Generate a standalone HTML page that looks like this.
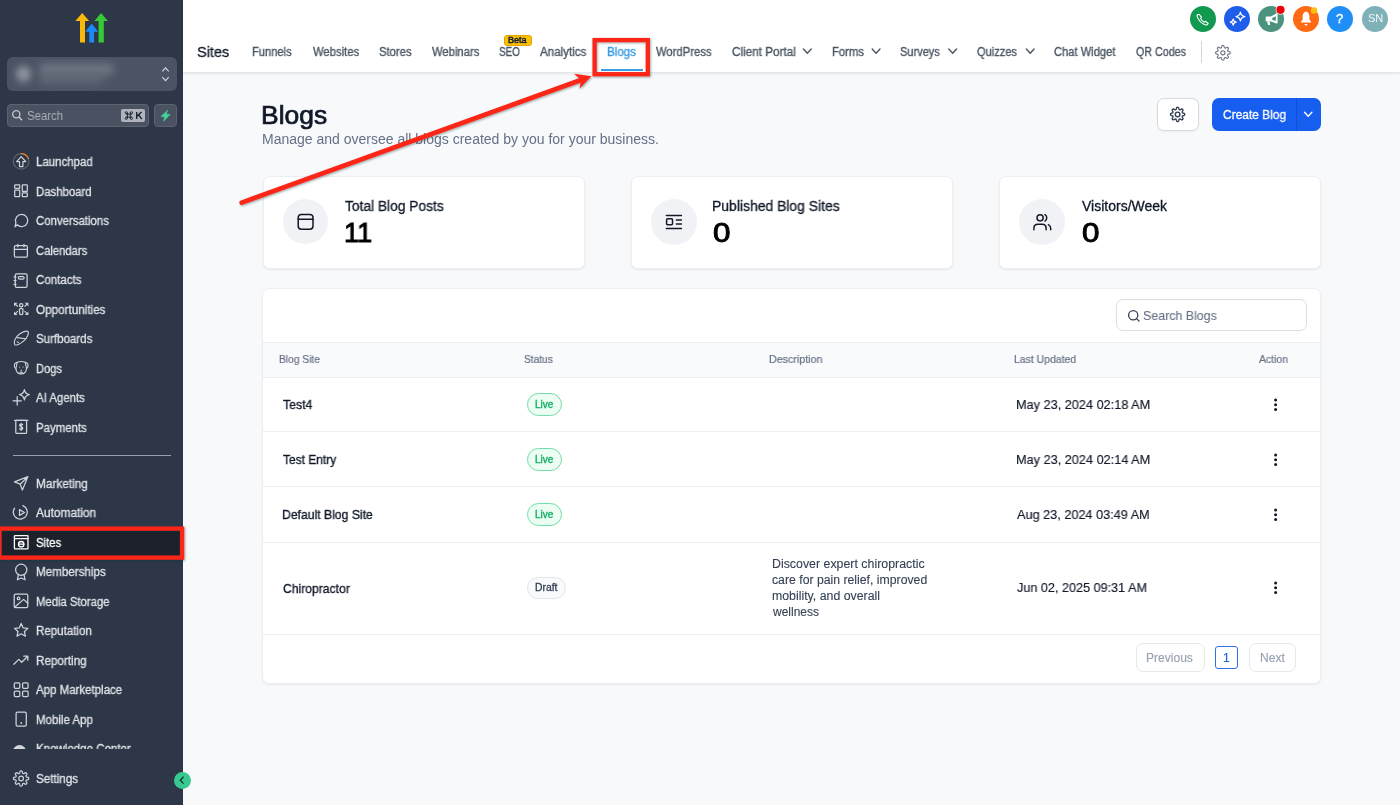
<!DOCTYPE html>
<html><head><meta charset="utf-8"><style>
*{margin:0;padding:0;box-sizing:border-box}
html,body{width:1400px;height:805px;overflow:hidden;background:#f8f9fb;font-family:"Liberation Sans", sans-serif}
.a{position:absolute}
.t{position:absolute;white-space:nowrap;will-change:transform}
svg{position:absolute;overflow:visible}
</style></head><body>
<!-- ============ SIDEBAR ============ -->
<div class="a" style="left:0;top:0;width:183px;height:805px;background:#2d3748"></div>
<svg style="left:0;top:0" width="200" height="50">
  <polygon fill="#f9b90b" points="75.3,21 82.2,13 89.2,21 85,21 85,42.6 80,42.6 80,21"/>
  <polygon fill="#188bf6" points="85.2,31.8 91.7,23.8 98.3,31.8 94,31.8 94,42.6 89.3,42.6 89.3,31.8"/>
  <polygon fill="#37ca37" points="94.4,21 101.1,13 107.8,21 103.8,21 103.8,42.6 98.6,42.6 98.6,21"/>
</svg>
<!-- location switcher -->
<div class="a" style="left:7px;top:57px;width:170px;height:34px;border-radius:6px;background:#4b5465;overflow:hidden">
  <div class="a" style="left:9px;top:9px;width:15px;height:16px;border-radius:8px;background:#8d939d;filter:blur(3.5px)"></div>
  <div class="a" style="left:32px;top:7px;width:75px;height:11px;border-radius:5px;background:#737a86;filter:blur(4px)"></div>
  <div class="a" style="left:32px;top:17px;width:65px;height:9px;border-radius:5px;background:#646b78;filter:blur(4px)"></div>
</div>
<svg style="left:0;top:0" width="183" height="100"><path d="M162.3,71.3 L165.5,67.8 L168.7,71.3 M162.3,77.2 L165.5,80.7 L168.7,77.2" fill="none" stroke="#d6d9de" stroke-width="1.1"/></svg>
<!-- search -->
<div class="a" style="left:6.6px;top:104.2px;width:142.6px;height:23.2px;border-radius:4px;background:#4a5262;border:1px solid #5c6474"></div>
<svg style="left:0;top:0" width="183" height="140"><circle cx="16.3" cy="114.3" r="3.6" fill="none" stroke="#c4c8cf" stroke-width="1.3"/><path d="M19,117 L22,120.3" stroke="#c4c8cf" stroke-width="1.4"/></svg>
<div class="t" style="left:27px;top:110px;font-size:12px;line-height:12px;color:#a9afb8;transform:scaleX(0.95);transform-origin:0 0">Search</div>
<div class="a" style="left:121px;top:109.3px;width:24px;height:12.8px;border-radius:2px;background:#aeb3bc"></div>
<svg style="left:0;top:0" width="183" height="140">
  <g fill="none" stroke="#1f2733" stroke-width="1">
    <path d="M127.4,112.6 V118.5 M130.3,112.6 V118.5 M126.2,114.1 H131.5 M126.2,117 H131.5"/>
    <circle cx="126.3" cy="112.8" r="1.1"/><circle cx="131.4" cy="112.8" r="1.1"/><circle cx="126.3" cy="118.3" r="1.1"/><circle cx="131.4" cy="118.3" r="1.1"/>
  </g>
  <path d="M136.7,112 V119 M141.5,112 L137,116.2 M138.5,114.9 L141.8,119" fill="none" stroke="#111827" stroke-width="1.25"/>
</svg>
<div class="a" style="left:154px;top:104.2px;width:23px;height:23.2px;border-radius:4px;background:#4a5262;border:1px solid #5c6474"></div>
<svg style="left:0;top:0" width="183" height="140"><path d="M167.6,110.2 L161,116.4 L164.8,116.9 L163.4,121.2 L170.2,114.6 L166.2,114.2 Z" fill="#3fd49a" stroke="#3fd49a" stroke-width="0.6" stroke-linejoin="round"/></svg>

<!-- active Sites -->
<div class="a" style="left:0;top:529px;width:181px;height:29px;background:#1c212c"></div>
<!-- divider -->
<div class="a" style="left:13px;top:455px;width:157.5px;height:1px;background:#9aa0aa"></div>

<!-- sidebar icons -->
<svg style="left:0;top:0" width="183" height="805" fill="none" stroke="#cfd3da" stroke-width="1.25" stroke-linecap="round" stroke-linejoin="round">
  <!-- launchpad -->
  <circle cx="21.1" cy="161.4" r="7.8" stroke="#5a6372"/>
  <path d="M21.1,153.6 A7.8,7.8 0 0 1 28.4,158.6" stroke="#e57b2a" stroke-width="1.4"/>
  <path d="M21.2,156.6 L16.6,161.6 H19.5 V166.6 H22.9 V161.6 H25.8 Z" stroke-width="1.2"/>
  <!-- dashboard -->
  <rect x="14.7" y="184.8" width="5" height="3.6" rx="0.6"/>
  <rect x="14.7" y="190" width="5" height="6.5" rx="0.6"/>
  <rect x="22.3" y="184.8" width="5" height="6.5" rx="0.6"/>
  <rect x="22.3" y="192.9" width="5" height="3.6" rx="0.6"/>
  <!-- conversations -->
  <path d="M17.3,224.8 A6.1,6.1 0 1 0 15.9,222.6 L15,226.8 Z"/>
  <!-- calendar -->
  <rect x="14.4" y="245.6" width="13" height="11.6" rx="1.2"/>
  <path d="M14.4,249.4 H27.4 M17.8,244.3 V246.8 M24,244.3 V246.8"/>
  <!-- contacts -->
  <rect x="15.3" y="273.8" width="11.8" height="13.6" rx="1.3"/>
  <rect x="18.3" y="276.6" width="5.8" height="2.6" rx="1.2"/>
  <path d="M14,276.8 H16 M14,280.6 H16 M14,284.4 H16"/>
  <!-- opportunities -->
  <circle cx="21.2" cy="305.2" r="1.7"/>
  <path d="M19.4,309.2 Q21.2,307.7 23,309.2 L22.7,314 Q21.2,315.3 19.7,314 Z"/>
  <g fill="#cfd3da" stroke="none">
    <polygon points="14,302.8 17.6,302.8 14,306.4"/>
    <polygon points="28.4,302.8 24.8,302.8 28.4,306.4"/>
    <polygon points="14,315 17.6,315 14,311.4"/>
    <polygon points="28.4,315 24.8,315 28.4,311.4"/>
  </g>
  <path d="M15.2,304 L17.6,306.4 M27.2,304 L24.8,306.4 M15.2,313.8 L17.6,311.4 M27.2,313.8 L24.8,311.4" stroke-width="1.1"/>
  <!-- surfboards -->
  <path d="M14.6,344.6 C13.2,342.2 15.5,336.8 19.6,334 C23,331.6 26.8,330.8 28.2,331.6 C29,333.4 27.2,338.2 23.4,341.2 C19.8,344.2 16,345.6 14.6,344.6 Z" stroke-width="1.1"/>
  <path d="M17.2,337.6 L25.6,338.8" stroke-width="1.1"/>
  <path d="M17.2,341.8 L18.4,342.4" stroke-width="1.1"/>
  <!-- dogs -->
  <path d="M17.2,362.3 C19.6,361.4 22.8,361.4 25.2,362.3 L27.6,363.6 C28.3,365.6 27.7,367.8 26.5,368.6 C26.2,371.8 24,373.9 21.2,373.9 C18.4,373.9 16.2,371.8 15.9,368.6 C14.7,367.8 14.1,365.6 14.8,363.6 Z" stroke-width="1.1"/>
  <path d="M17.2,362.3 C16.5,364.6 16.4,366.8 15.9,368.6 M25.2,362.3 C25.9,364.6 26,366.8 26.5,368.6" stroke-width="1.1"/>
  <g fill="#cfd3da" stroke="none"><circle cx="19.4" cy="367" r="0.6"/><circle cx="23" cy="367" r="0.6"/><path d="M20.2,369.8 H22.2 L21.2,371 Z"/></g>
  <path d="M21.2,371 V372 M19.8,372.4 Q21.2,373 22.6,372.4" stroke-width="0.9"/>
  <!-- ai agents -->
  <path d="M17.2,396.6 V405 M13,400.8 H21.4"/>
  <path d="M24.4,389.6 C24.9,392.6 26.2,394 29.3,394.7 C26.2,395.4 24.9,396.8 24.4,399.8 C23.9,396.8 22.6,395.4 19.5,394.7 C22.6,394 23.9,392.6 24.4,389.6 Z"/>
  <!-- payments -->
  <rect x="15.8" y="420.3" width="10.8" height="13" rx="0.8"/>
  <path d="M14.5,420.3 H27.9"/>
  <path d="M22.6,424.8 C22.2,424 19.6,423.9 19.6,425.4 C19.6,427 22.8,426.4 22.8,428.2 C22.8,429.6 20.2,429.6 19.6,428.8 M21.2,423.3 V430.4"/>
  <!-- marketing -->
  <path d="M27.9,476.6 L14.5,481.9 L20.2,484.2 L22.4,490 Z M27.9,476.6 L20.2,484.2"/>
  <!-- automation -->
  <path d="M22.9,505.6 A7,7 0 1 1 16.2,517.8"/>
  <path d="M16.2,517.8 A7,7 0 0 1 14.6,508.2"/>
  <path d="M19.5,509.6 L24.5,512.5 L19.5,515.4 Z"/>
  <!-- sites (white) -->
  <g stroke="#ffffff" stroke-width="1.3">
    <rect x="14.4" y="535.6" width="13.6" height="13.2" rx="0.6"/>
    <path d="M14.4,538.6 H28"/>
    <circle cx="21.2" cy="544.2" r="2.7"/>
    <path d="M18.6,544.2 H23.8"/>
  </g>
  <!-- memberships -->
  <circle cx="21.2" cy="569.8" r="5.6"/>
  <path d="M18.3,574.8 L17.4,579.8 L21.2,578 L25,579.8 L24.1,574.8"/>
  <!-- media storage -->
  <rect x="14.2" y="594" width="13.6" height="13.6" rx="1.4"/>
  <circle cx="18.6" cy="598.4" r="1.3"/>
  <path d="M27.8,603.2 L23.6,599.4 L14.6,607.2"/>
  <!-- reputation -->
  <path d="M21.2,623.5 L23.2,627.9 L27.9,628.4 L24.4,631.5 L25.4,636.2 L21.2,633.8 L17,636.2 L18,631.5 L14.5,628.4 L19.2,627.9 Z"/>
  <!-- reporting -->
  <path d="M13.9,664.3 L18.8,659.4 L21.7,662.3 L27.8,656.2 M23.8,656.2 H27.8 V660.2"/>
  <!-- app marketplace -->
  <rect x="14.3" y="682.8" width="5.5" height="5.5" rx="1"/>
  <rect x="22.6" y="682.8" width="5.5" height="5.5" rx="1"/>
  <rect x="14.3" y="691" width="5.5" height="5.5" rx="1"/>
  <rect x="22.6" y="691" width="5.5" height="5.5" rx="1"/>
  <!-- mobile -->
  <rect x="16.1" y="712.2" width="10.2" height="14" rx="1.4"/>
  <path d="M21.2,722.9 V723.1" stroke-width="1.8"/>
  <!-- settings gear -->
  <g transform="translate(21.1,778.5)"><path d="M0.00,-7.60 L0.30,-7.58 L0.59,-7.50 L0.87,-7.33 L1.10,-6.96 L1.27,-6.38 L1.39,-5.79 L1.53,-5.41 L1.69,-5.21 L1.87,-5.08 L2.07,-4.99 L2.27,-4.92 L2.48,-4.88 L2.75,-4.91 L3.11,-5.08 L3.61,-5.40 L4.14,-5.70 L4.57,-5.79 L4.89,-5.72 L5.15,-5.57 L5.37,-5.37 L5.57,-5.15 L5.72,-4.89 L5.79,-4.57 L5.70,-4.14 L5.40,-3.61 L5.08,-3.11 L4.91,-2.75 L4.88,-2.48 L4.92,-2.27 L4.99,-2.07 L5.08,-1.87 L5.21,-1.69 L5.41,-1.53 L5.79,-1.39 L6.38,-1.27 L6.96,-1.10 L7.33,-0.87 L7.50,-0.59 L7.58,-0.30 L7.60,0.00 L7.58,0.30 L7.50,0.59 L7.33,0.87 L6.96,1.10 L6.38,1.27 L5.79,1.39 L5.41,1.53 L5.21,1.69 L5.08,1.87 L4.99,2.07 L4.92,2.27 L4.88,2.48 L4.91,2.75 L5.08,3.11 L5.40,3.61 L5.70,4.14 L5.79,4.57 L5.72,4.89 L5.57,5.15 L5.37,5.37 L5.15,5.57 L4.89,5.72 L4.57,5.79 L4.14,5.70 L3.61,5.40 L3.11,5.08 L2.75,4.91 L2.48,4.88 L2.27,4.92 L2.07,4.99 L1.87,5.08 L1.69,5.21 L1.53,5.41 L1.39,5.79 L1.27,6.38 L1.10,6.96 L0.87,7.33 L0.59,7.50 L0.30,7.58 L0.00,7.60 L-0.30,7.58 L-0.59,7.50 L-0.87,7.33 L-1.10,6.96 L-1.27,6.38 L-1.39,5.79 L-1.53,5.41 L-1.69,5.21 L-1.87,5.08 L-2.07,4.99 L-2.27,4.92 L-2.48,4.88 L-2.75,4.91 L-3.11,5.08 L-3.61,5.40 L-4.14,5.70 L-4.57,5.79 L-4.89,5.72 L-5.15,5.57 L-5.37,5.37 L-5.57,5.15 L-5.72,4.89 L-5.79,4.57 L-5.70,4.14 L-5.40,3.61 L-5.08,3.11 L-4.91,2.75 L-4.88,2.48 L-4.92,2.27 L-4.99,2.07 L-5.08,1.87 L-5.21,1.69 L-5.41,1.53 L-5.79,1.39 L-6.38,1.27 L-6.96,1.10 L-7.33,0.87 L-7.50,0.59 L-7.58,0.30 L-7.60,0.00 L-7.58,-0.30 L-7.50,-0.59 L-7.33,-0.87 L-6.96,-1.10 L-6.38,-1.27 L-5.79,-1.39 L-5.41,-1.53 L-5.21,-1.69 L-5.08,-1.87 L-4.99,-2.07 L-4.92,-2.27 L-4.88,-2.48 L-4.91,-2.75 L-5.08,-3.11 L-5.40,-3.61 L-5.70,-4.14 L-5.79,-4.57 L-5.72,-4.89 L-5.57,-5.15 L-5.37,-5.37 L-5.15,-5.57 L-4.89,-5.72 L-4.57,-5.79 L-4.14,-5.70 L-3.61,-5.40 L-3.11,-5.08 L-2.75,-4.91 L-2.48,-4.88 L-2.27,-4.92 L-2.07,-4.99 L-1.87,-5.08 L-1.69,-5.21 L-1.53,-5.41 L-1.39,-5.79 L-1.27,-6.38 L-1.10,-6.96 L-0.87,-7.33 L-0.59,-7.50 L-0.30,-7.58 Z"/><circle r="2.3"/></g>
</svg>
<!-- knowledge center clipped -->
<div class="a" style="left:0;top:735px;width:183px;height:14px;overflow:hidden">
  <div class="a" style="left:12.5px;top:9.5px;width:13.5px;height:14px;border-radius:7px;background:#d3d7dd"></div>
  <div class="t" style="left:36.1px;top:8.2px;font-size:12px;line-height:12px;color:#e1e4e8;transform:scaleX(0.96);transform-origin:0 0;-webkit-text-stroke:0.3px #e1e4e8">Knowledge Center</div>
</div>
<!-- collapse btn -->
<div class="a" style="left:174px;top:772px;width:16.5px;height:16.5px;border-radius:9px;background:#37c98f"></div>
<svg style="left:0;top:0" width="200" height="805"><path d="M183.5,776.8 L180.3,780.2 L183.5,783.6" fill="none" stroke="#1d2b2a" stroke-width="1.3"/></svg>

<!-- ============ HEADER ============ -->
<div class="a" style="left:183px;top:0;width:1217px;height:73px;background:#fff;border-bottom:1px solid #e4e6ea;box-shadow:0 1px 3px rgba(0,0,0,0.07)"></div>
<div class="a" style="left:601px;top:69px;width:42px;height:2px;background:#3d9be0"></div>
<div class="a" style="left:503.6px;top:35.3px;width:28.4px;height:10.6px;border-radius:3px;background:#fcbf04;border:1px solid #e2a400"></div>
<div class="a" style="left:1201px;top:41px;width:1px;height:22px;background:#d1d5db"></div>
<svg style="left:0;top:0" width="1400" height="72" fill="none" stroke="#4b5563" stroke-width="1.4" stroke-linecap="round" stroke-linejoin="round">
  <path d="M803.4,49 L807.3,53.2 L811.2,49"/>
  <path d="M872.2,49 L876.1,53.2 L880,49"/>
  <path d="M948.8,49 L952.7,53.2 L956.6,49"/>
  <path d="M1026.3,49 L1030.2,53.2 L1034.1,49"/>
  <g transform="translate(1222.9,52.8)" stroke="#6b7280" stroke-width="1.1"><path d="M0.00,-7.30 L0.29,-7.28 L0.57,-7.21 L0.83,-7.04 L1.06,-6.69 L1.22,-6.13 L1.34,-5.57 L1.47,-5.21 L1.63,-5.01 L1.80,-4.89 L1.99,-4.80 L2.18,-4.74 L2.39,-4.70 L2.64,-4.72 L2.99,-4.88 L3.47,-5.20 L3.98,-5.48 L4.39,-5.57 L4.70,-5.50 L4.95,-5.35 L5.16,-5.16 L5.35,-4.95 L5.50,-4.70 L5.57,-4.39 L5.48,-3.98 L5.20,-3.47 L4.88,-2.99 L4.72,-2.64 L4.70,-2.39 L4.74,-2.18 L4.80,-1.99 L4.89,-1.80 L5.01,-1.63 L5.21,-1.47 L5.57,-1.34 L6.13,-1.22 L6.69,-1.06 L7.04,-0.83 L7.21,-0.57 L7.28,-0.29 L7.30,0.00 L7.28,0.29 L7.21,0.57 L7.04,0.83 L6.69,1.06 L6.13,1.22 L5.57,1.34 L5.21,1.47 L5.01,1.63 L4.89,1.80 L4.80,1.99 L4.74,2.18 L4.70,2.39 L4.72,2.64 L4.88,2.99 L5.20,3.47 L5.48,3.98 L5.57,4.39 L5.50,4.70 L5.35,4.95 L5.16,5.16 L4.95,5.35 L4.70,5.50 L4.39,5.57 L3.98,5.48 L3.47,5.20 L2.99,4.88 L2.64,4.72 L2.39,4.70 L2.18,4.74 L1.99,4.80 L1.80,4.89 L1.63,5.01 L1.47,5.21 L1.34,5.57 L1.22,6.13 L1.06,6.69 L0.83,7.04 L0.57,7.21 L0.29,7.28 L0.00,7.30 L-0.29,7.28 L-0.57,7.21 L-0.83,7.04 L-1.06,6.69 L-1.22,6.13 L-1.34,5.57 L-1.47,5.21 L-1.63,5.01 L-1.80,4.89 L-1.99,4.80 L-2.18,4.74 L-2.39,4.70 L-2.64,4.72 L-2.99,4.88 L-3.47,5.20 L-3.98,5.48 L-4.39,5.57 L-4.70,5.50 L-4.95,5.35 L-5.16,5.16 L-5.35,4.95 L-5.50,4.70 L-5.57,4.39 L-5.48,3.98 L-5.20,3.47 L-4.88,2.99 L-4.72,2.64 L-4.70,2.39 L-4.74,2.18 L-4.80,1.99 L-4.89,1.80 L-5.01,1.63 L-5.21,1.47 L-5.57,1.34 L-6.13,1.22 L-6.69,1.06 L-7.04,0.83 L-7.21,0.57 L-7.28,0.29 L-7.30,0.00 L-7.28,-0.29 L-7.21,-0.57 L-7.04,-0.83 L-6.69,-1.06 L-6.13,-1.22 L-5.57,-1.34 L-5.21,-1.47 L-5.01,-1.63 L-4.89,-1.80 L-4.80,-1.99 L-4.74,-2.18 L-4.70,-2.39 L-4.72,-2.64 L-4.88,-2.99 L-5.20,-3.47 L-5.48,-3.98 L-5.57,-4.39 L-5.50,-4.70 L-5.35,-4.95 L-5.16,-5.16 L-4.95,-5.35 L-4.70,-5.50 L-4.39,-5.57 L-3.98,-5.48 L-3.47,-5.20 L-2.99,-4.88 L-2.64,-4.72 L-2.39,-4.70 L-2.18,-4.74 L-1.99,-4.80 L-1.80,-4.89 L-1.63,-5.01 L-1.47,-5.21 L-1.34,-5.57 L-1.22,-6.13 L-1.06,-6.69 L-0.83,-7.04 L-0.57,-7.21 L-0.29,-7.28 Z"/><circle r="2.1"/></g>
</svg>
<!-- top-right circles -->
<div class="a" style="left:1189.8px;top:6px;width:26px;height:26px;border-radius:13px;background:#10994f"></div>
<div class="a" style="left:1224px;top:6px;width:26px;height:26px;border-radius:13px;background:#1f5deb"></div>
<div class="a" style="left:1258.3px;top:6px;width:26px;height:26px;border-radius:13px;background:#4b937c"></div>
<div class="a" style="left:1292.9px;top:6px;width:26px;height:26px;border-radius:13px;background:#ff6a14"></div>
<div class="a" style="left:1327.1px;top:6px;width:26px;height:26px;border-radius:13px;background:#1f8ff7"></div>
<div class="a" style="left:1361.6px;top:6px;width:26px;height:26px;border-radius:13px;background:#7fb1b8"></div>
<svg style="left:0;top:0" width="1400" height="40">
  <!-- phone -->
  <path d="M1197.6,14.5 C1197,15.1 1196.9,16.5 1198,18.5 C1199.3,21 1201.5,23.2 1203.8,24.3 C1205.6,25.2 1206.9,25 1207.5,24.3 L1208.2,23.5 L1205.7,21.3 L1204.3,22.2 C1203,21.6 1201.3,20 1200.6,18.6 L1201.5,17.2 L1199.3,14.5 Z" fill="none" stroke="#fff" stroke-width="1.1" stroke-linejoin="round"/>
  <!-- sparkles -->
  <path d="M1240.4,12.2 C1240.9,15.2 1241.8,16.1 1244.8,16.6 C1241.8,17.1 1240.9,18 1240.4,21 C1239.9,18 1239,17.1 1236,16.6 C1239,16.1 1239.9,15.2 1240.4,12.2 Z M1233.2,19.2 C1233.5,21.2 1234.2,21.9 1236.2,22.2 C1234.2,22.5 1233.5,23.2 1233.2,25.2 C1232.9,23.2 1232.2,22.5 1230.2,22.2 C1232.2,21.9 1232.9,21.2 1233.2,19.2 Z" fill="none" stroke="#fff" stroke-width="1.2" stroke-linejoin="round"/>
  <!-- megaphone -->
  <path d="M1266.6,16.4 H1271 L1276.6,13.2 C1277.3,13 1277.6,13.4 1277.6,14 V22.8 C1277.6,23.4 1277.3,23.8 1276.6,23.6 L1271,21.5 H1266.6 C1266,21.5 1265.7,21.1 1265.7,20.6 V17.3 C1265.7,16.8 1266,16.4 1266.6,16.4 Z" fill="#fff"/>
  <path d="M1272.2,18 L1275.8,16.2 V21 L1272.2,19.8 Z" fill="#4b937c"/>
  <path d="M1267.2,21.4 L1267.9,24.4 C1268,24.8 1268.3,25 1268.7,25 H1269.4 C1269.9,25 1270.2,24.6 1270.1,24.2 L1269.6,21.4 Z" fill="#fff"/>
  <circle cx="1280.5" cy="9.8" r="4.9" fill="#ffffff" opacity="0.9"/>
  <circle cx="1280.5" cy="9.8" r="4.1" fill="#f2000a"/>
  <!-- bell -->
  <path d="M1306,11.6 C1303.5,12 1302.6,14.4 1302.6,17 V19.5 L1300.6,22.5 H1311.4 L1309.4,19.5 V17 C1309.4,14.4 1308.5,12 1306,11.6 Z" fill="#fff"/>
  <path d="M1304.5,23.9 H1307.5 A1.5,1.5 0 0 1 1304.5,23.9 Z" fill="#fff"/>
  <circle cx="1314" cy="10.5" r="3.2" fill="#fbbe12"/>
</svg>
<div class="t" style="left:1336.3px;top:12.4px;font-size:13px;line-height:13px;color:#fff;-webkit-text-stroke:0.4px #fff">?</div>
<div class="t" style="left:1367.5px;top:13.4px;font-size:11px;line-height:11px;color:#f2f7f8">SN</div>

<!-- ============ CONTENT ============ -->
<div class="a" style="left:1157px;top:98.3px;width:41.8px;height:32.6px;border-radius:7px;background:#fff;border:1px solid #d5d9e0;box-shadow:0 1px 2px rgba(16,24,40,0.05)"></div>
<svg style="left:0;top:0" width="1400" height="140" fill="none" stroke="#344054" stroke-width="1.4" stroke-linejoin="round">
  <g transform="translate(1177.6,114.4)"><path d="M0.00,-7.10 L0.28,-7.08 L0.55,-7.01 L0.81,-6.85 L1.03,-6.52 L1.19,-5.98 L1.31,-5.45 L1.44,-5.10 L1.60,-4.91 L1.77,-4.80 L1.95,-4.71 L2.14,-4.64 L2.35,-4.60 L2.59,-4.63 L2.93,-4.78 L3.39,-5.07 L3.88,-5.34 L4.27,-5.42 L4.57,-5.35 L4.81,-5.20 L5.02,-5.02 L5.20,-4.81 L5.35,-4.57 L5.42,-4.27 L5.34,-3.88 L5.07,-3.39 L4.78,-2.93 L4.63,-2.59 L4.60,-2.35 L4.64,-2.14 L4.71,-1.95 L4.80,-1.77 L4.91,-1.60 L5.10,-1.44 L5.45,-1.31 L5.98,-1.19 L6.52,-1.03 L6.85,-0.81 L7.01,-0.55 L7.08,-0.28 L7.10,0.00 L7.08,0.28 L7.01,0.55 L6.85,0.81 L6.52,1.03 L5.98,1.19 L5.45,1.31 L5.10,1.44 L4.91,1.60 L4.80,1.77 L4.71,1.95 L4.64,2.14 L4.60,2.35 L4.63,2.59 L4.78,2.93 L5.07,3.39 L5.34,3.88 L5.42,4.27 L5.35,4.57 L5.20,4.81 L5.02,5.02 L4.81,5.20 L4.57,5.35 L4.27,5.42 L3.88,5.34 L3.39,5.07 L2.93,4.78 L2.59,4.63 L2.35,4.60 L2.14,4.64 L1.95,4.71 L1.77,4.80 L1.60,4.91 L1.44,5.10 L1.31,5.45 L1.19,5.98 L1.03,6.52 L0.81,6.85 L0.55,7.01 L0.28,7.08 L0.00,7.10 L-0.28,7.08 L-0.55,7.01 L-0.81,6.85 L-1.03,6.52 L-1.19,5.98 L-1.31,5.45 L-1.44,5.10 L-1.60,4.91 L-1.77,4.80 L-1.95,4.71 L-2.14,4.64 L-2.35,4.60 L-2.59,4.63 L-2.93,4.78 L-3.39,5.07 L-3.88,5.34 L-4.27,5.42 L-4.57,5.35 L-4.81,5.20 L-5.02,5.02 L-5.20,4.81 L-5.35,4.57 L-5.42,4.27 L-5.34,3.88 L-5.07,3.39 L-4.78,2.93 L-4.63,2.59 L-4.60,2.35 L-4.64,2.14 L-4.71,1.95 L-4.80,1.77 L-4.91,1.60 L-5.10,1.44 L-5.45,1.31 L-5.98,1.19 L-6.52,1.03 L-6.85,0.81 L-7.01,0.55 L-7.08,0.28 L-7.10,0.00 L-7.08,-0.28 L-7.01,-0.55 L-6.85,-0.81 L-6.52,-1.03 L-5.98,-1.19 L-5.45,-1.31 L-5.10,-1.44 L-4.91,-1.60 L-4.80,-1.77 L-4.71,-1.95 L-4.64,-2.14 L-4.60,-2.35 L-4.63,-2.59 L-4.78,-2.93 L-5.07,-3.39 L-5.34,-3.88 L-5.42,-4.27 L-5.35,-4.57 L-5.20,-4.81 L-5.02,-5.02 L-4.81,-5.20 L-4.57,-5.35 L-4.27,-5.42 L-3.88,-5.34 L-3.39,-5.07 L-2.93,-4.78 L-2.59,-4.63 L-2.35,-4.60 L-2.14,-4.64 L-1.95,-4.71 L-1.77,-4.80 L-1.60,-4.91 L-1.44,-5.10 L-1.31,-5.45 L-1.19,-5.98 L-1.03,-6.52 L-0.81,-6.85 L-0.55,-7.01 L-0.28,-7.08 Z"/><circle r="2.3"/></g>
</svg>
<div class="a" style="left:1212px;top:98.2px;width:109px;height:32.8px;border-radius:7px;background:#155eef"></div>
<div class="a" style="left:1295.5px;top:98.2px;width:1px;height:32.8px;background:#1150d0"></div>
<svg style="left:0;top:0" width="1400" height="140"><path d="M1304.5,112.3 L1308.2,116.2 L1311.9,112.3" fill="none" stroke="#fff" stroke-width="1.4" stroke-linecap="round" stroke-linejoin="round"/></svg>

<!-- stat cards -->
<div class="a" style="left:262.5px;top:176px;width:322px;height:93.2px;border-radius:7px;background:#fff;border:1px solid #eceef2;box-shadow:0 1px 2px rgba(16,24,40,0.08)"></div>
<div class="a" style="left:630.8px;top:176px;width:322px;height:93.2px;border-radius:7px;background:#fff;border:1px solid #eceef2;box-shadow:0 1px 2px rgba(16,24,40,0.08)"></div>
<div class="a" style="left:999px;top:176px;width:322px;height:93.2px;border-radius:7px;background:#fff;border:1px solid #eceef2;box-shadow:0 1px 2px rgba(16,24,40,0.08)"></div>
<div class="a" style="left:282.6px;top:198.8px;width:45.6px;height:45.6px;border-radius:23px;background:#f1f2f6"></div>
<div class="a" style="left:651px;top:199px;width:45.6px;height:45.6px;border-radius:23px;background:#f1f2f6"></div>
<div class="a" style="left:1019.3px;top:199px;width:45.6px;height:45.6px;border-radius:23px;background:#f1f2f6"></div>
<svg style="left:0;top:0" width="1400" height="300" fill="none" stroke="#101828" stroke-width="1.5" stroke-linecap="round" stroke-linejoin="round">
  <rect x="298.2" y="214.4" width="14.8" height="14.8" rx="3.2"/>
  <path d="M298.2,219.3 H313"/>
  <path d="M666.4,215.4 H681.4 M666.4,228.5 H681.4 M676.4,219.9 H681.4 M676.4,224.1 H681.4"/>
  <rect x="666.6" y="218.7" width="5.9" height="6.1" rx="1"/>
  <circle cx="1040.1" cy="217.8" r="3.1"/>
  <path d="M1033.9,229.7 V228.2 C1033.9,225.9 1035.6,224.3 1037.9,224.3 H1042.1 C1044.4,224.3 1046.1,225.9 1046.1,228.2 V229.7"/>
  <path d="M1045,214.6 C1047.3,215.6 1047.3,220.1 1045,221.1 M1048.4,224.6 C1049.8,225.4 1050.7,226.8 1050.7,228.4 V229.7"/>
</svg>

<!-- table card -->
<div class="a" style="left:262px;top:288px;width:1059px;height:396px;border-radius:7px;background:#fff;border:1px solid #eceef2;box-shadow:0 1px 2px rgba(16,24,40,0.08);overflow:hidden">
  <div class="a" style="left:0;top:53px;width:1060px;height:36px;background:#f9fafb;border-top:1px solid #eceef2;border-bottom:1px solid #eceef2"></div>
  <div class="a" style="left:0;top:142px;width:1060px;height:1px;background:#eceef2"></div>
  <div class="a" style="left:0;top:197px;width:1060px;height:1px;background:#eceef2"></div>
  <div class="a" style="left:0;top:252.5px;width:1060px;height:1px;background:#eceef2"></div>
  <div class="a" style="left:0;top:345px;width:1060px;height:1px;background:#eceef2"></div>
</div>
<div class="a" style="left:1115.6px;top:299.3px;width:191.7px;height:32.2px;border-radius:7px;background:#fff;border:1px solid #dcdfe5"></div>
<svg style="left:0;top:0" width="1400" height="340" fill="none" stroke="#344054" stroke-width="1.3" stroke-linecap="round"><circle cx="1133.2" cy="315.2" r="4.6"/><path d="M1136.6,318.6 L1139,321"/></svg>
<!-- badges -->
<div class="a" style="left:527.2px;top:393px;width:34.7px;height:23px;border-radius:12px;background:#ecfdf3;border:1px solid #6fe0a5"></div>
<div class="a" style="left:527.2px;top:448.2px;width:34.7px;height:23px;border-radius:12px;background:#ecfdf3;border:1px solid #6fe0a5"></div>
<div class="a" style="left:527.2px;top:503.2px;width:34.7px;height:23px;border-radius:12px;background:#ecfdf3;border:1px solid #6fe0a5"></div>
<div class="a" style="left:527.4px;top:576.5px;width:38.3px;height:22.6px;border-radius:12px;background:#f9fafb;border:1px solid #e2e5ea"></div>
<!-- kebabs -->
<svg style="left:0;top:0" width="1400" height="700" fill="#101828">
  <circle cx="1275.6" cy="400" r="1.5"/><circle cx="1275.6" cy="404.8" r="1.5"/><circle cx="1275.6" cy="409.6" r="1.5"/>
  <circle cx="1275.6" cy="455" r="1.5"/><circle cx="1275.6" cy="459.8" r="1.5"/><circle cx="1275.6" cy="464.6" r="1.5"/>
  <circle cx="1275.6" cy="510" r="1.5"/><circle cx="1275.6" cy="514.8" r="1.5"/><circle cx="1275.6" cy="519.6" r="1.5"/>
  <circle cx="1275.6" cy="583" r="1.5"/><circle cx="1275.6" cy="587.8" r="1.5"/><circle cx="1275.6" cy="592.6" r="1.5"/>
</svg>
<!-- pagination -->
<div class="a" style="left:1135.5px;top:643.3px;width:69px;height:29px;border-radius:7px;background:#fff;border:1px solid #e6e8ec"></div>
<div class="a" style="left:1215.2px;top:646.3px;width:23.3px;height:22.5px;border-radius:3px;background:#fff;border:1px solid #2f6fed"></div>
<div class="a" style="left:1249.3px;top:643.3px;width:47.2px;height:29px;border-radius:7px;background:#fff;border:1px solid #e6e8ec"></div>

<div class='t' style='left:36.25px;top:156.04px;font-size:12px;line-height:12px;font-weight:400;color:#e1e4e8;transform:scaleX(0.9554);transform-origin:0 0;-webkit-text-stroke:0.3px #e1e4e8;'>Launchpad</div>
<div class='t' style='left:36.25px;top:185.54px;font-size:12px;line-height:12px;font-weight:400;color:#e1e4e8;transform:scaleX(0.9478);transform-origin:0 0;-webkit-text-stroke:0.3px #e1e4e8;'>Dashboard</div>
<div class='t' style='left:36.25px;top:215.04px;font-size:12px;line-height:12px;font-weight:400;color:#e1e4e8;transform:scaleX(0.9504);transform-origin:0 0;-webkit-text-stroke:0.3px #e1e4e8;'>Conversations</div>
<div class='t' style='left:36.25px;top:244.54px;font-size:12px;line-height:12px;font-weight:400;color:#e1e4e8;transform:scaleX(0.9361);transform-origin:0 0;-webkit-text-stroke:0.3px #e1e4e8;'>Calendars</div>
<div class='t' style='left:36.25px;top:274.04px;font-size:12px;line-height:12px;font-weight:400;color:#e1e4e8;transform:scaleX(0.9629);transform-origin:0 0;-webkit-text-stroke:0.3px #e1e4e8;'>Contacts</div>
<div class='t' style='left:36.25px;top:303.54px;font-size:12px;line-height:12px;font-weight:400;color:#e1e4e8;transform:scaleX(0.9738);transform-origin:0 0;-webkit-text-stroke:0.3px #e1e4e8;'>Opportunities</div>
<div class='t' style='left:36.25px;top:333.04px;font-size:12px;line-height:12px;font-weight:400;color:#e1e4e8;transform:scaleX(0.9608);transform-origin:0 0;-webkit-text-stroke:0.3px #e1e4e8;'>Surfboards</div>
<div class='t' style='left:36.25px;top:362.54px;font-size:12px;line-height:12px;font-weight:400;color:#e1e4e8;transform:scaleX(0.9281);transform-origin:0 0;-webkit-text-stroke:0.3px #e1e4e8;'>Dogs</div>
<div class='t' style='left:36.25px;top:392.04px;font-size:12px;line-height:12px;font-weight:400;color:#e1e4e8;transform:scaleX(0.9514);transform-origin:0 0;-webkit-text-stroke:0.3px #e1e4e8;'>AI Agents</div>
<div class='t' style='left:36.25px;top:421.54px;font-size:12px;line-height:12px;font-weight:400;color:#e1e4e8;transform:scaleX(0.9521);transform-origin:0 0;-webkit-text-stroke:0.3px #e1e4e8;'>Payments</div>
<div class='t' style='left:36.25px;top:477.74px;font-size:12px;line-height:12px;font-weight:400;color:#e1e4e8;transform:scaleX(0.9844);transform-origin:0 0;-webkit-text-stroke:0.3px #e1e4e8;'>Marketing</div>
<div class='t' style='left:36.25px;top:507.24px;font-size:12px;line-height:12px;font-weight:400;color:#e1e4e8;transform:scaleX(0.9912);transform-origin:0 0;-webkit-text-stroke:0.3px #e1e4e8;'>Automation</div>
<div class='t' style='left:36.25px;top:536.74px;font-size:12px;line-height:12px;font-weight:400;color:#ffffff;transform:scaleX(0.9409);transform-origin:0 0;-webkit-text-stroke:0.3px #ffffff;'>Sites</div>
<div class='t' style='left:36.25px;top:566.24px;font-size:12px;line-height:12px;font-weight:400;color:#e1e4e8;transform:scaleX(0.9691);transform-origin:0 0;-webkit-text-stroke:0.3px #e1e4e8;'>Memberships</div>
<div class='t' style='left:36.25px;top:595.74px;font-size:12px;line-height:12px;font-weight:400;color:#e1e4e8;transform:scaleX(0.9417);transform-origin:0 0;-webkit-text-stroke:0.3px #e1e4e8;'>Media Storage</div>
<div class='t' style='left:36.25px;top:625.24px;font-size:12px;line-height:12px;font-weight:400;color:#e1e4e8;transform:scaleX(0.9622);transform-origin:0 0;-webkit-text-stroke:0.3px #e1e4e8;'>Reputation</div>
<div class='t' style='left:36.25px;top:654.74px;font-size:12px;line-height:12px;font-weight:400;color:#e1e4e8;transform:scaleX(0.9736);transform-origin:0 0;-webkit-text-stroke:0.3px #e1e4e8;'>Reporting</div>
<div class='t' style='left:36.25px;top:684.24px;font-size:12px;line-height:12px;font-weight:400;color:#e1e4e8;transform:scaleX(0.9571);transform-origin:0 0;-webkit-text-stroke:0.3px #e1e4e8;'>App Marketplace</div>
<div class='t' style='left:36.25px;top:713.74px;font-size:12px;line-height:12px;font-weight:400;color:#e1e4e8;transform:scaleX(0.9576);transform-origin:0 0;-webkit-text-stroke:0.3px #e1e4e8;'>Mobile App</div>
<div class='t' style='left:36.25px;top:773.04px;font-size:12px;line-height:12px;font-weight:400;color:#e1e4e8;transform:scaleX(0.9710);transform-origin:0 0;-webkit-text-stroke:0.3px #e1e4e8;'>Settings</div>
<div class='t' style='left:197.05px;top:43.90px;font-size:15px;line-height:15px;font-weight:400;color:#111827;transform:scaleX(0.9681);transform-origin:0 0;-webkit-text-stroke:0.3px #111827;'>Sites</div>
<div class='t' style='left:252.38px;top:46.24px;font-size:12px;line-height:12px;font-weight:400;color:#4b5563;transform:scaleX(0.9288);transform-origin:0 0;-webkit-text-stroke:0.35px #4b5563;'>Funnels</div>
<div class='t' style='left:312.58px;top:46.24px;font-size:12px;line-height:12px;font-weight:400;color:#4b5563;transform:scaleX(0.9393);transform-origin:0 0;-webkit-text-stroke:0.35px #4b5563;'>Websites</div>
<div class='t' style='left:379.18px;top:46.24px;font-size:12px;line-height:12px;font-weight:400;color:#4b5563;transform:scaleX(0.9385);transform-origin:0 0;-webkit-text-stroke:0.35px #4b5563;'>Stores</div>
<div class='t' style='left:431.98px;top:46.24px;font-size:12px;line-height:12px;font-weight:400;color:#4b5563;transform:scaleX(0.9382);transform-origin:0 0;-webkit-text-stroke:0.35px #4b5563;'>Webinars</div>
<div class='t' style='left:499.48px;top:46.24px;font-size:12px;line-height:12px;font-weight:400;color:#4b5563;transform:scaleX(0.8217);transform-origin:0 0;-webkit-text-stroke:0.35px #4b5563;'>SEO</div>
<div class='t' style='left:540.38px;top:46.24px;font-size:12px;line-height:12px;font-weight:400;color:#4b5563;transform:scaleX(0.9653);transform-origin:0 0;-webkit-text-stroke:0.35px #4b5563;'>Analytics</div>
<div class='t' style='left:656.07px;top:46.24px;font-size:12px;line-height:12px;font-weight:400;color:#4b5563;transform:scaleX(0.9378);transform-origin:0 0;-webkit-text-stroke:0.35px #4b5563;'>WordPress</div>
<div class='t' style='left:731.77px;top:46.24px;font-size:12px;line-height:12px;font-weight:400;color:#4b5563;transform:scaleX(0.9761);transform-origin:0 0;-webkit-text-stroke:0.35px #4b5563;'>Client Portal</div>
<div class='t' style='left:831.77px;top:46.24px;font-size:12px;line-height:12px;font-weight:400;color:#4b5563;transform:scaleX(0.9398);transform-origin:0 0;-webkit-text-stroke:0.35px #4b5563;'>Forms</div>
<div class='t' style='left:900.48px;top:46.24px;font-size:12px;line-height:12px;font-weight:400;color:#4b5563;transform:scaleX(0.9193);transform-origin:0 0;-webkit-text-stroke:0.35px #4b5563;'>Surveys</div>
<div class='t' style='left:977.38px;top:46.24px;font-size:12px;line-height:12px;font-weight:400;color:#4b5563;transform:scaleX(0.9216);transform-origin:0 0;-webkit-text-stroke:0.35px #4b5563;'>Quizzes</div>
<div class='t' style='left:1054.47px;top:46.24px;font-size:12px;line-height:12px;font-weight:400;color:#4b5563;transform:scaleX(0.9304);transform-origin:0 0;-webkit-text-stroke:0.35px #4b5563;'>Chat Widget</div>
<div class='t' style='left:1136.47px;top:46.24px;font-size:12px;line-height:12px;font-weight:400;color:#4b5563;transform:scaleX(0.8934);transform-origin:0 0;-webkit-text-stroke:0.35px #4b5563;'>QR Codes</div>
<div class='t' style='left:607.07px;top:45.84px;font-size:12px;line-height:12px;font-weight:400;color:#3d9be0;transform:scaleX(0.9644);transform-origin:0 0;-webkit-text-stroke:0.35px #3d9be0;'>Blogs</div>
<div class='t' style='left:508.43px;top:36.48px;font-size:9px;line-height:9px;font-weight:400;color:#0f1f3d;transform:scaleX(1.0076);transform-origin:0 0;-webkit-text-stroke:0.45px #0f1f3d;'>Beta</div>
<div class='t' style='left:260.83px;top:102.64px;font-size:25px;line-height:25px;font-weight:400;color:#101828;transform:scaleX(1.0577);transform-origin:0 0;-webkit-text-stroke:0.7px #101828;'>Blogs</div>
<div class='t' style='left:261.60px;top:132.15px;font-size:14px;line-height:14px;font-weight:400;color:#667085;'>Manage and oversee all blogs created by you for your business.</div>
<div class='t' style='left:345.15px;top:199.15px;font-size:14px;line-height:14px;font-weight:400;color:#101828;transform:scaleX(0.9832);transform-origin:0 0;-webkit-text-stroke:0.3px #101828;'>Total Blog Posts</div>
<div class='t' style='left:712.26px;top:199.15px;font-size:14px;line-height:14px;font-weight:400;color:#101828;transform:scaleX(0.9944);transform-origin:0 0;-webkit-text-stroke:0.3px #101828;'>Published Blog Sites</div>
<div class='t' style='left:1082.25px;top:198.95px;font-size:14px;line-height:14px;font-weight:400;color:#101828;-webkit-text-stroke:0.3px #101828;'>Visitors/Week</div>
<div class='t' style='left:343.56px;top:219.10px;font-size:28px;line-height:28px;font-weight:400;color:#000000;transform:scaleX(0.9700);transform-origin:0 0;-webkit-text-stroke:1.0px #000000;'>11</div>
<div class='t' style='left:713.38px;top:219.20px;font-size:28px;line-height:28px;font-weight:400;color:#000000;transform:scaleX(1.1214);transform-origin:0 0;-webkit-text-stroke:1.0px #000000;'>0</div>
<div class='t' style='left:1081.98px;top:219.30px;font-size:28px;line-height:28px;font-weight:400;color:#000000;transform:scaleX(1.1214);transform-origin:0 0;-webkit-text-stroke:1.0px #000000;'>0</div>
<div class='t' style='left:1222.75px;top:109.14px;font-size:12px;line-height:12px;font-weight:400;color:#ffffff;transform:scaleX(0.9953);transform-origin:0 0;-webkit-text-stroke:0.3px #ffffff;'>Create Blog</div>
<div class='t' style='left:279.40px;top:354.29px;font-size:11px;line-height:11px;font-weight:400;color:#667085;transform:scaleX(0.9292);transform-origin:0 0;-webkit-text-stroke:0.2px #667085;'>Blog Site</div>
<div class='t' style='left:524.00px;top:354.29px;font-size:11px;line-height:11px;font-weight:400;color:#667085;transform:scaleX(0.9216);transform-origin:0 0;-webkit-text-stroke:0.2px #667085;'>Status</div>
<div class='t' style='left:769.10px;top:354.29px;font-size:11px;line-height:11px;font-weight:400;color:#667085;transform:scaleX(0.9708);transform-origin:0 0;-webkit-text-stroke:0.2px #667085;'>Description</div>
<div class='t' style='left:1013.80px;top:354.29px;font-size:11px;line-height:11px;font-weight:400;color:#667085;transform:scaleX(0.9492);transform-origin:0 0;-webkit-text-stroke:0.2px #667085;'>Last Updated</div>
<div class='t' style='left:1259.10px;top:354.29px;font-size:11px;line-height:11px;font-weight:400;color:#667085;transform:scaleX(0.9490);transform-origin:0 0;-webkit-text-stroke:0.2px #667085;'>Action</div>
<div class='t' style='left:1142.65px;top:309.30px;font-size:13px;line-height:13px;font-weight:400;color:#667085;transform:scaleX(0.9548);transform-origin:0 0;-webkit-text-stroke:0.1px #667085;'>Search Blogs</div>
<div class='t' style='left:283.38px;top:398.40px;font-size:13px;line-height:13px;font-weight:400;color:#101828;transform:scaleX(0.9451);transform-origin:0 0;-webkit-text-stroke:0.35px #101828;'>Test4</div>
<div class='t' style='left:283.38px;top:453.30px;font-size:13px;line-height:13px;font-weight:400;color:#101828;transform:scaleX(0.9203);transform-origin:0 0;-webkit-text-stroke:0.35px #101828;'>Test Entry</div>
<div class='t' style='left:282.44px;top:508.20px;font-size:13px;line-height:13px;font-weight:400;color:#101828;transform:scaleX(0.9377);transform-origin:0 0;-webkit-text-stroke:0.35px #101828;'>Default Blog Site</div>
<div class='t' style='left:283.38px;top:581.70px;font-size:13px;line-height:13px;font-weight:400;color:#101828;transform:scaleX(0.9343);transform-origin:0 0;-webkit-text-stroke:0.35px #101828;'>Chiropractor</div>
<div class='t' style='left:1016.20px;top:398.00px;font-size:13px;line-height:13px;font-weight:400;color:#101828;transform:scaleX(0.9776);transform-origin:0 0;-webkit-text-stroke:0.15px #101828;'>May 23, 2024 02:18 AM</div>
<div class='t' style='left:1016.20px;top:452.90px;font-size:13px;line-height:13px;font-weight:400;color:#101828;transform:scaleX(0.9776);transform-origin:0 0;-webkit-text-stroke:0.15px #101828;'>May 23, 2024 02:14 AM</div>
<div class='t' style='left:1017.18px;top:507.90px;font-size:13px;line-height:13px;font-weight:400;color:#101828;transform:scaleX(0.9763);transform-origin:0 0;-webkit-text-stroke:0.15px #101828;'>Aug 23, 2024 03:49 AM</div>
<div class='t' style='left:1017.18px;top:581.10px;font-size:13px;line-height:13px;font-weight:400;color:#101828;transform:scaleX(0.9719);transform-origin:0 0;-webkit-text-stroke:0.15px #101828;'>Jun 02, 2025 09:31 AM</div>
<div class='t' style='left:771.65px;top:558.34px;font-size:12px;line-height:12px;font-weight:400;color:#344054;transform:scaleX(1.0307);transform-origin:0 0;-webkit-text-stroke:0.1px #344054;'>Discover expert chiropractic</div>
<div class='t' style='left:772.35px;top:574.39px;font-size:12px;line-height:12px;font-weight:400;color:#344054;transform:scaleX(1.0205);transform-origin:0 0;-webkit-text-stroke:0.1px #344054;'>care for pain relief, improved</div>
<div class='t' style='left:772.35px;top:590.44px;font-size:12px;line-height:12px;font-weight:400;color:#344054;transform:scaleX(1.0269);transform-origin:0 0;-webkit-text-stroke:0.1px #344054;'>mobility, and overall</div>
<div class='t' style='left:772.65px;top:606.49px;font-size:12px;line-height:12px;font-weight:400;color:#344054;transform:scaleX(0.9975);transform-origin:0 0;-webkit-text-stroke:0.1px #344054;'>wellness</div>
<div class='t' style='left:535.20px;top:400.14px;font-size:10px;line-height:10px;font-weight:400;color:#17b26a;-webkit-text-stroke:0.4px #17b26a;'>Live</div>
<div class='t' style='left:535.20px;top:455.34px;font-size:10px;line-height:10px;font-weight:400;color:#17b26a;-webkit-text-stroke:0.4px #17b26a;'>Live</div>
<div class='t' style='left:535.20px;top:510.34px;font-size:10px;line-height:10px;font-weight:400;color:#17b26a;-webkit-text-stroke:0.4px #17b26a;'>Live</div>
<div class='t' style='left:535.15px;top:583.34px;font-size:10px;line-height:10px;font-weight:400;color:#344054;transform:scaleX(1.0369);transform-origin:0 0;-webkit-text-stroke:0.3px #344054;'>Draft</div>
<div class='t' style='left:1146.28px;top:652.24px;font-size:12px;line-height:12px;font-weight:400;color:#98a2b3;transform:scaleX(1.0035);transform-origin:0 0;-webkit-text-stroke:0.15px #98a2b3;'>Previous</div>
<div class='t' style='left:1223.48px;top:652.24px;font-size:12px;line-height:12px;font-weight:400;color:#2563eb;-webkit-text-stroke:0.15px #2563eb;'>1</div>
<div class='t' style='left:1260.28px;top:652.24px;font-size:12px;line-height:12px;font-weight:400;color:#98a2b3;transform:scaleX(1.0043);transform-origin:0 0;-webkit-text-stroke:0.15px #98a2b3;'>Next</div>
<svg style="left:0;top:0" width="1400" height="805">
  <defs><filter id="sh" x="-10%" y="-10%" width="120%" height="120%"><feDropShadow dx="0.8" dy="1" stdDeviation="0.8" flood-color="#003c3c" flood-opacity="0.45"/></filter></defs>
  <g filter="url(#sh)">
    <rect x="-0.6" y="528.6" width="182.7" height="29" fill="none" stroke="#fb2518" stroke-width="4.3"/>
    <rect x="594.6" y="40.1" width="53.2" height="34.1" fill="none" stroke="#fb2518" stroke-width="4.3"/>
    <path d="M241.7,202.6 L579.5,80.5" stroke="#fb2518" stroke-width="4.6" stroke-linecap="round"/>
    <polygon points="591.5,76.2 574.1,73.8 578.9,78.1 580.6,82.6 579.4,88.8" fill="#fb2518"/>
  </g>
</svg>

</body></html>
